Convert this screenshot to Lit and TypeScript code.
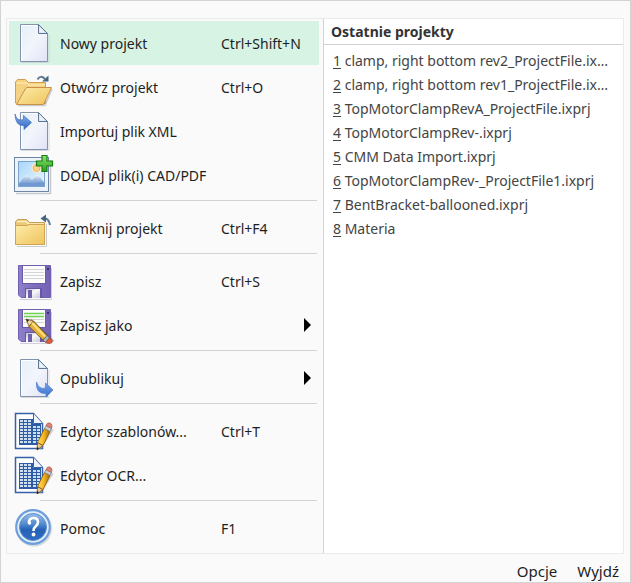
import { LitElement, html, css, svg, nothing, type TemplateResult } from "lit";
import { customElement } from "lit/decorators.js";

const page = (id: string) => svg`
  <defs>
    <linearGradient id="pg-${id}" x1="0" y1="0" x2="1" y2="1">
      <stop offset="0" stop-color="#e4f0f8"/><stop offset="0.5" stop-color="#f3f5fc"/><stop offset="1" stop-color="#dfe2f6"/>
    </linearGradient>
  </defs>
  <path d="M21 41.5H49V14" fill="none" stroke="#c4cbd0" stroke-opacity=".7"/>
  <path d="M20.5 3.5H38.5L47.500 12.500V40.5H20.500Z" fill="url(#pg-${id})" stroke="#8193ad"/>
  <path d="M21.500 39.500V4.500H37.500" fill="none" stroke="#fff"/>
  <path d="M38.500 3.500V12.500H47.500Z" fill="#d3dff0" stroke="#5f7594"/>
  <path d="M39.500 6V11.500H45Z" fill="#f1f5fb"/>
`;

const folderGradient = (id: string) => svg`
  <defs>
    <linearGradient id="fd-${id}" x1="0" y1="0" x2="1" y2="1">
      <stop offset="0" stop-color="#fdecaa"/><stop offset="1" stop-color="#efc35c"/>
    </linearGradient>
  </defs>`;

const floppy = (id: string) => svg`
  <defs>
    <linearGradient id="fl-${id}" x1="0" y1="0" x2="1" y2="0">
      <stop offset="0" stop-color="#8f80ca"/><stop offset=".5" stop-color="#7e6dbd"/><stop offset="1" stop-color="#7361b4"/>
    </linearGradient>
    <linearGradient id="mt-${id}" x1="0" y1="0" x2="1" y2="1">
      <stop offset="0" stop-color="#b8bcca"/><stop offset=".45" stop-color="#fafafd"/><stop offset="1" stop-color="#c5c8d4"/>
    </linearGradient>
  </defs>
  <path d="M20 40.500H51.500V9" fill="none" stroke="#cfcfdf"/>
  <path d="M18.500 6.500H50.500V38.500H21L18.500 36Z" fill="url(#fl-${id})" stroke="#7160b0"/>
  <rect x="22" y="7" width="24" height="18" fill="#6a59ab"/>
  <rect x="23" y="7" width="22" height="17" fill="#fbfcfb"/>
  <path d="M24 10.500H44M24 13.500H44M24 16.500H44M24 19.500H44" stroke="#d2d5d8"/>
  <rect x="47" y="9" width="2" height="2" fill="#3a2e70"/>
  <rect x="25" y="29" width="17" height="10" fill="#6756a8"/>
  <rect x="26" y="30" width="14" height="9" fill="url(#mt-${id})"/>
  <rect x="28" y="31" width="4" height="8" fill="#7061ac"/>
`;

const sheet = (id: string) => svg`
  <defs>
    <linearGradient id="pc-${id}" x1="0" y1="0" x2="1" y2="0">
      <stop offset="0" stop-color="#ffe072"/><stop offset=".5" stop-color="#f5b521"/><stop offset="1" stop-color="#a86d08"/>
    </linearGradient>
  </defs>
  <path d="M15.500 4.500H33.500L42.500 14.500V39.500H15.500Z" fill="#fff" stroke="#3562a6" stroke-width="1.500"/>
  <path d="M33.500 4.500V14.500H42.500" fill="#f0f5fc" stroke="#3562a6"/>
  <path d="M19 10H33V15H41V36H19Z" fill="#2c5ca6"/>
  <g fill="#cfdff2">
    ${[11, 14, 17, 20, 23, 26, 29, 32].map((y) =>
      [20, 24, 28, 33, 37].map((x) => (y < 15 && x > 28 ? nothing : svg`<rect x=${x} y=${y} width="3" height="2"/>`)),
    )}
  </g>
  <path d="M39 40L52 20" stroke="#aaa" stroke-opacity=".5" stroke-width="4"/>
  <path d="M37 41L37.500 33.500L43 36.500Z" fill="#edcb94" stroke="#6c4310" stroke-width=".8"/>
  <path d="M37 41L37.100 38L39.200 39.200Z" fill="#222"/>
  <path d="M37.500 33.500L44.500 19.500L50 22.500L43 36.500Z" fill="url(#pc-${id})" stroke="#875708" stroke-width=".8"/>
  <path d="M44.500 19.500L46 16.500L51.500 19.500L50 22.500Z" fill="#c8ced5" stroke="#777" stroke-width=".7"/>
  <path d="M46 16.500Q47 13 50 14Q53 15.500 51.500 19.500Z" fill="#de8278" stroke="#b05750" stroke-width=".7"/>
`;

const icons: Record<string, TemplateResult> = {
  page: page("new"),
  open: svg`
    ${folderGradient("open")}
    <path d="M18 40.500H45L52 24" fill="none" stroke="#ccc" stroke-width="1.500"/>
    <path d="M15.500 38V17L17.500 14.500H25.500L28.500 17.500H45.500V38.500H16Z" fill="#f5d282" stroke="#d0a050"/>
    <path d="M16.500 18H27L29 20H44.500" fill="none" stroke="#fff0bf"/>
    <path d="M16.500 39.500L23.500 27L26.500 22.500H51.500L43.500 39.500Z" fill="url(#fd-open)" stroke="#c6924a"/>
    <path d="M37.500 14.500Q40.500 9.500 45 14" fill="none" stroke="#5c7a94" stroke-width="2"/>
    <path d="M42 16.500H48.500V10.500Z" fill="#46677f"/>`,
  import: svg`
    ${page("import")}
    <defs><linearGradient id="blue-in" x1="0" y1="0" x2="0" y2="1"><stop offset="0" stop-color="#88b3f0"/><stop offset="1" stop-color="#2f62bd"/></linearGradient></defs>
    <path d="M15 5Q17 13 23.500 10.500V6.500L31.500 13.500L24 20.500V16.500Q15.500 17.500 15 5Z" fill="url(#blue-in)" stroke="#4576c9" stroke-width=".8"/>`,
  picture: svg`
    <defs>
      <linearGradient id="sky" x1="0" y1="0" x2="1" y2="1"><stop offset="0" stop-color="#a9d5fa"/><stop offset="1" stop-color="#edf8ff"/></linearGradient>
      <linearGradient id="hill" x1="0" y1="0" x2="0" y2="1"><stop offset="0" stop-color="#f4f8fd"/><stop offset=".35" stop-color="#adc4e4"/><stop offset="1" stop-color="#5f8ac5"/></linearGradient>
      <linearGradient id="plus" x1="0" y1="0" x2="0" y2="1"><stop offset="0" stop-color="#8ee26b"/><stop offset="1" stop-color="#27a21b"/></linearGradient>
    </defs>
    <path d="M16 40.500H50.500V7" fill="none" stroke="#c5c9cf" stroke-width="1.500"/>
    <rect x="14.500" y="4.500" width="34" height="34" fill="#edf3fa" stroke="#7184a3"/>
    <rect x="18.500" y="8.500" width="26" height="25" fill="url(#sky)" stroke="#78a5cf"/>
    <circle cx="36.500" cy="15" r="5" fill="#fff0d0"/>
    <circle cx="36.500" cy="15" r="3.500" fill="#fbd58c" stroke="#edac61"/>
    <path d="M19 30L25 23Q27 21 29 24L32 27L36 22.500Q38 21 40 24L44 29V33H19Z" fill="url(#hill)"/>
    <path d="M19 33H44V30Q38 28 33 31Q25 28 19 32Z" fill="#6e98cf"/>
    <path d="M42 2.500H47V8H52.500V13H47V18.500H42V13H36.500V8H42Z" fill="url(#plus)" stroke="#177c18" stroke-width="1.200"/>`,
  close: svg`
    ${folderGradient("close")}
    <path d="M17 40.500H46.500V18" fill="none" stroke="#ccc"/>
    <path d="M15.500 38.500V16L17.500 13.500H26.500L29.500 16.500H44.500V38.500Z" fill="#edc779" stroke="#c79d58"/>
    <path d="M17 15.500H26L28.500 18H43.500" fill="none" stroke="#fff0bf" stroke-width="1.500"/>
    <path d="M15.500 19.500H27L29 18.500H44.500V38.500H15.500Z" fill="url(#fd-close)" stroke="#d0a355"/>
    <path d="M43 12Q49 12 50 19" fill="none" stroke="#5c7a94" stroke-width="2"/>
    <path d="M40.500 12.500L46 8.500V16.500Z" fill="#46677f"/>`,
  save: floppy("save"),
  saveAs: svg`
    ${floppy("as")}
    <path d="M24 10.500H44M24 13.500H44" stroke="#6fd052" stroke-width="1.500"/>
    <path d="M30 17L53 39" stroke="#444" stroke-opacity=".3" stroke-width="4"/>
    <path d="M26 16L33.500 18L29 23.500Z" fill="#f2d5a0" stroke="#7b5625" stroke-width=".8"/>
    <path d="M26 16L29 17L27.500 19Z" fill="#222"/>
    <path d="M33.500 18L47 32.500L43 37L29 23.500Z" fill="#e5b033" stroke="#6b4b12" stroke-width=".8"/>
    <path d="M32 20L45.500 34" stroke="#ffe184" stroke-width="2"/>
    <path d="M47 32.500L49.500 35L45.500 39.500L43 37Z" fill="#adb4b8" stroke="#5b5b5b" stroke-width=".7"/>
    <path d="M49.500 35L52 37Q53 40 48.500 40.500L45.500 39.500Z" fill="#e75c31" stroke="#9c4027" stroke-width=".7"/>`,
  publish: svg`
    ${page("publish")}
    <defs><linearGradient id="blue-out" x1="0" y1="0" x2="0" y2="1"><stop offset="0" stop-color="#79a7ec"/><stop offset="1" stop-color="#3b70c9"/></linearGradient></defs>
    <path d="M36.500 26Q39 34 45.500 32V27L53 34L46 41V37.500Q35.500 38 36.500 26Z" fill="url(#blue-out)" stroke="#5584d0" stroke-width=".8"/>`,
  template: sheet("template"),
  ocr: sheet("ocr"),
  help: svg`
    <defs>
      <linearGradient id="ball" x1="0" y1="0" x2="0" y2="1"><stop offset="0" stop-color="#9dbfe8"/><stop offset=".4" stop-color="#5189cd"/><stop offset=".6" stop-color="#2562b6"/><stop offset="1" stop-color="#2f6dc0"/></linearGradient>
    </defs>
    <circle cx="34" cy="22.500" r="18" fill="#bdc5ce" opacity=".6"/>
    <circle cx="33" cy="21" r="16.800" fill="#e3eefb" stroke="#6f9fdb" stroke-width="2.200"/>
    <circle cx="33" cy="21" r="13.500" fill="url(#ball)" stroke="#5c8fd2"/>
    <path d="M28.800 17Q29 12 33.500 12Q38 12 38 16Q38 18.500 35.500 20.500Q33.500 22 33.500 25" fill="none" stroke="#fff" stroke-width="2.600"/>
    <circle cx="29.500" cy="17" r="1.700" fill="#fff"/>
    <circle cx="33.500" cy="28.500" r="1.900" fill="#fff"/>`,
};

interface Command {
  icon: string;
  label: string;
  keys?: string;
  submenu?: boolean;
  active?: boolean;
}

const groups: Command[][] = [
  [
    { icon: "page", label: "Nowy projekt", keys: "Ctrl+Shift+N", active: true },
    { icon: "open", label: "Otwórz projekt", keys: "Ctrl+O" },
    { icon: "import", label: "Importuj plik XML" },
    { icon: "picture", label: "DODAJ plik(i) CAD/PDF" },
  ],
  [{ icon: "close", label: "Zamknij projekt", keys: "Ctrl+F4" }],
  [
    { icon: "save", label: "Zapisz", keys: "Ctrl+S" },
    { icon: "saveAs", label: "Zapisz jako", submenu: true },
  ],
  [{ icon: "publish", label: "Opublikuj", submenu: true }],
  [
    { icon: "template", label: "Edytor szablonów...", keys: "Ctrl+T" },
    { icon: "ocr", label: "Edytor OCR..." },
  ],
  [{ icon: "help", label: "Pomoc", keys: "F1" }],
];

const recent = [
  "clamp, right bottom rev2_ProjectFile.ixprj",
  "clamp, right bottom rev1_ProjectFile.ixprj",
  "TopMotorClampRevA_ProjectFile.ixprj",
  "TopMotorClampRev-.ixprj",
  "CMM Data Import.ixprj",
  "TopMotorClampRev-_ProjectFile1.ixprj",
  "BentBracket-ballooned.ixprj",
  "Materia",
];

@customElement("app-root")
export class AppRoot extends LitElement {
  static styles = css`
    :host {
      display: block;
      font: 14px/20px "Noto Sans", "Open Sans", sans-serif;
      color: #1e1e1e;
    }
    * {
      box-sizing: border-box;
    }
    button {
      font: inherit;
      color: inherit;
      background: none;
      border: 0;
      padding: 0;
      margin: 0;
      text-align: left;
    }
    .window {
      display: flex;
      flex-direction: column;
      min-height: 100vh;
      padding: 17px 6px 0 5px;
      background: #fafafa;
      border: 1px solid #d4d4d4;
    }
    .panes {
      display: grid;
      grid-template-columns: 316px minmax(0, 1fr);
      border: 1px solid #ebebeb;
    }
    .menu {
      padding: 2px 4px 3px 2px;
    }
    .group + .group {
      margin-top: 3px;
    }
    .group + .group::before {
      content: "";
      display: block;
      height: 1px;
      margin: 0 2px 5px 31px;
      background: #d2d2d2;
    }
    .command {
      display: grid;
      grid-template-columns: 51px 161px 1fr 16px;
      align-items: center;
      width: 100%;
      height: 44px;
      white-space: nowrap;
    }
    .command.active,
    .command:hover {
      background: #d6f3e3;
    }
    .icon {
      display: block;
      width: 48px;
      height: 44px;
    }
    .label,
    .keys {
      padding-top: 2px;
    }
    .keys {
      grid-column: 3;
    }
    .arrow {
      grid-column: 4;
      grid-row: 1;
      width: 8px;
      height: 14px;
    }
    .recent {
      background: #fff;
      border-left: 1px solid #d2d2d2;
      color: #444;
    }
    .heading {
      margin: 0;
      padding: 3px 7px 2px;
      border-bottom: 1px solid #d2d2d2;
      font: inherit;
      font-weight: 700;
      color: #333;
    }
    .list {
      list-style: none;
      margin: 0;
      padding: 4px 9px;
    }
    .file {
      display: block;
      width: 100%;
      line-height: 24px;
      overflow: hidden;
      white-space: nowrap;
      text-overflow: ellipsis;
    }
    .digit {
      text-decoration: underline;
      text-underline-offset: 2px;
    }
    .footer {
      display: flex;
      justify-content: flex-end;
      gap: 20px;
      padding: 7px 5px 0;
      font-size: 15px;
    }
  `;

  private command(c: Command) {
    return html`<button class="command ${c.active ? "active" : ""}" role="menuitem" aria-haspopup=${c.submenu ? "menu" : "false"}>
      <svg class="icon" viewBox="9 0 48 44" aria-hidden="true">${icons[c.icon]}</svg>
      <span class="label">${c.label}</span>
      ${c.keys ? html`<span class="keys">${c.keys}</span>` : nothing}
      ${c.submenu
        ? html`<svg class="arrow" viewBox="0 0 8 14" aria-hidden="true"><path d="M1 0L8 7L1 14Z" /></svg>`
        : nothing}
    </button>`;
  }

  render() {
    return html`<main class="window">
      <div class="panes">
        <div class="menu" role="menu" aria-label="Projekt">
          ${groups.map((g) => html`<div class="group" role="group">${g.map((c) => this.command(c))}</div>`)}
        </div>
        <section class="recent">
          <h2 class="heading">Ostatnie projekty</h2>
          <ol class="list">
            ${recent.map(
              (name, i) => html`<li><button class="file"><span class="digit">${i + 1}</span> ${name}</button></li>`,
            )}
          </ol>
        </section>
      </div>
      <footer class="footer">
        <button>Opcje</button>
        <button>Wyjdź</button>
      </footer>
    </main>`;
  }
}
